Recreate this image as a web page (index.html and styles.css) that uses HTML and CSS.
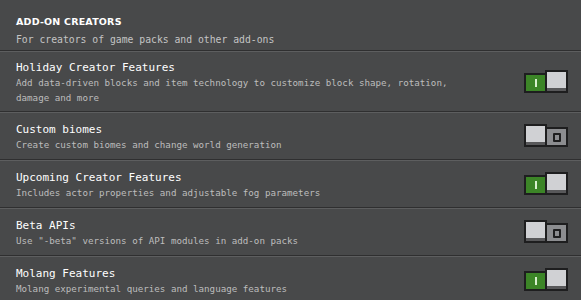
FILE: index.html
```html
<!DOCTYPE html>
<html>
<head>
<meta charset="utf-8">
<link rel="stylesheet" href="styles.css">
</head>
<body>
<div class="panel">
  <div class="section-head">
    <div class="section-title">ADD-ON CREATORS</div>
    <div class="section-sub">For creators of game packs and other add-ons</div>
  </div>

  <div class="row row-tall">
    <div class="text">
      <div class="title">Holiday Creator Features</div>
      <div class="desc">Add data-driven blocks and item technology to customize block shape, rotation,<br>damage and more</div>
    </div>
    <div class="toggle on"><span class="track"><span class="mark-on"></span></span><span class="knob"></span></div>
  </div>

  <div class="row">
    <div class="text">
      <div class="title">Custom biomes</div>
      <div class="desc">Create custom biomes and change world generation</div>
    </div>
    <div class="toggle off"><span class="knob"></span><span class="track"><span class="mark-off"></span></span></div>
  </div>

  <div class="row">
    <div class="text">
      <div class="title">Upcoming Creator Features</div>
      <div class="desc">Includes actor properties and adjustable fog parameters</div>
    </div>
    <div class="toggle on"><span class="track"><span class="mark-on"></span></span><span class="knob"></span></div>
  </div>

  <div class="row">
    <div class="text">
      <div class="title">Beta APIs</div>
      <div class="desc">Use "-beta" versions of API modules in add-on packs</div>
    </div>
    <div class="toggle off"><span class="knob"></span><span class="track"><span class="mark-off"></span></span></div>
  </div>

  <div class="row">
    <div class="text">
      <div class="title">Molang Features</div>
      <div class="desc">Molang experimental queries and language features</div>
    </div>
    <div class="toggle on"><span class="track"><span class="mark-on"></span></span><span class="knob"></span></div>
  </div>
</div>
</body>
</html>
```

FILE: styles.css
```css
html, body {
  margin: 0;
  padding: 0;
  background: #48494a;
  height: 100%;
  overflow: hidden;
}

.panel {
  font-family: "DejaVu Sans Mono", monospace;
  color: #ffffff;
}

.section-head {
  padding: 14px 16px 3px 16px;
}

.section-title {
  font-family: "DejaVu Sans", sans-serif;
  font-weight: bold;
  font-size: 9.5px;
  line-height: 16px;
  letter-spacing: 0.2px;
  color: #ffffff;
}

.section-sub {
  margin-top: 2px;
  font-size: 9.75px;
  line-height: 15px;
  color: #c4c4c4;
}

.row {
  display: flex;
  align-items: center;
  justify-content: space-between;
  border-top: 1px solid #2f2f30;
  box-shadow: inset 0 1px 0 #5d5e5f;
  padding: 10px 13px 7px 16px;
}

.row-tall {
  padding-top: 9px;
  padding-bottom: 6px;
}

.title {
  font-size: 11px;
  line-height: 15px;
  color: #ffffff;
}

.desc {
  font-size: 9.2px;
  line-height: 15px;
  color: #bdbdbd;
}

.toggle {
  display: flex;
  align-items: flex-end;
  margin-bottom: 3px;
}

.knob {
  width: 19px;
  height: 19px;
  background: #d0d1d4;
  border: 2px solid #1e1e1f;
  box-shadow: inset 0 -3px 0 #58585a;
}

.track {
  display: flex;
  align-items: center;
  justify-content: center;
  height: 16px;
}

.on .track {
  width: 19px;
  background: #3c8527;
  border: 2px solid #1e1e1f;
  border-right: none;
}

.off .track {
  width: 19px;
  background: #8c8d90;
  border: 2px solid #1e1e1f;
  border-left: none;
}

.mark-on {
  width: 2px;
  height: 8px;
  background: #d9f0cf;
}

.mark-off {
  width: 4px;
  height: 5px;
  border: 2px solid #1e1e1f;
  border-radius: 1px;
}
```
